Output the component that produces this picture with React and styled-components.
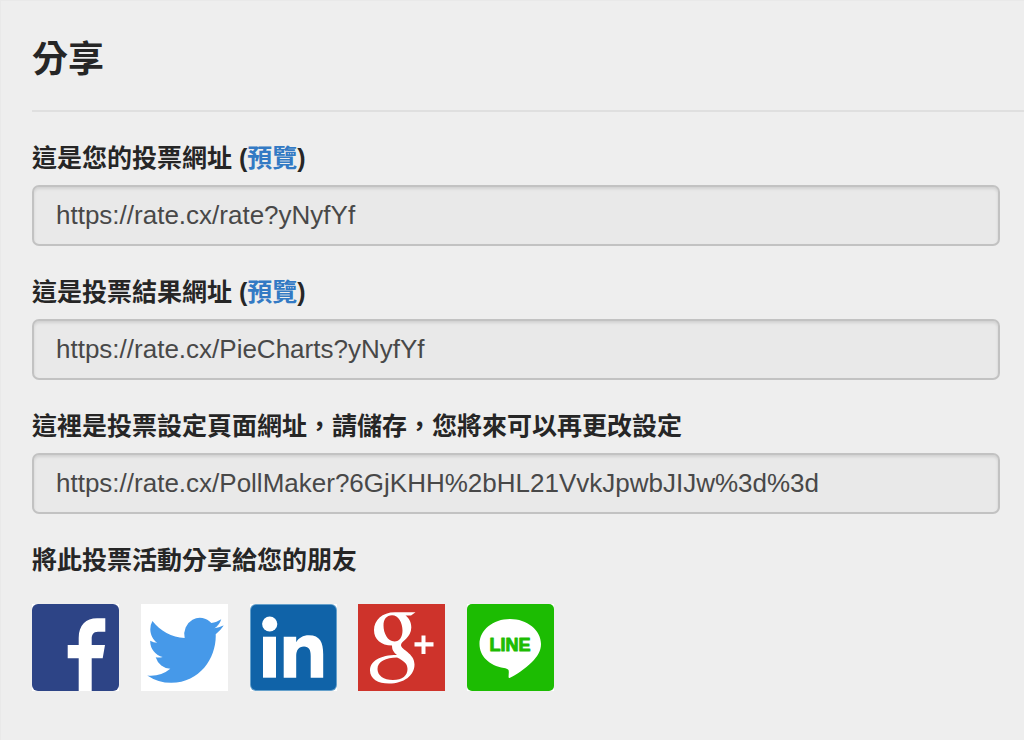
import React from "react";
import styled, { createGlobalStyle } from "styled-components";

const fields = [
  {
    id: "vote-url",
    label: "這是您的投票網址",
    value: "https://rate.cx/rate?yNyfYf",
    preview: true,
  },
  {
    id: "result-url",
    label: "這是投票結果網址",
    value: "https://rate.cx/PieCharts?yNyfYf",
    preview: true,
  },
  {
    id: "setting-url",
    label: "這裡是投票設定頁面網址，請儲存，您將來可以再更改設定",
    value: "https://rate.cx/PollMaker?6GjKHH%2bHL21VvkJpwbJIJw%3d%3d",
    preview: false,
  },
];

const FacebookIcon = () => (
  <Icon viewBox="0 0 87 87" aria-hidden="true">
    <rect width="87" height="87" fill="#fff" />
    <rect width="87" height="87" rx="6" fill="#2d4486" />
    <path
      fill="#fff"
      d="M46.7 87V54.3H35.7V41H46.7V34C46.7 21 54 14.3 65 14.3H73.3V27.7H66C61 27.7 59.7 31 59.7 35V41H73L70.7 54.3H59.7V87Z"
    />
  </Icon>
);

const TwitterIcon = () => (
  <Icon viewBox="0 0 87 87" aria-hidden="true">
    <rect width="87" height="87" fill="#fff" />
    <path
      fill="#4699e9"
      transform="translate(6.2 6.4) scale(3.18 3.33)"
      d="M23.953 4.57a10 10 0 01-2.825.775 4.958 4.958 0 002.163-2.723c-.951.555-2.005.959-3.127 1.184a4.92 4.92 0 00-8.384 4.482C7.69 8.095 4.067 6.13 1.64 3.162a4.822 4.822 0 00-.666 2.475c0 1.71.87 3.213 2.188 4.096a4.904 4.904 0 01-2.228-.616v.06a4.923 4.923 0 003.946 4.827 4.996 4.996 0 01-2.212.085 4.936 4.936 0 004.604 3.417 9.867 9.867 0 01-6.102 2.105c-.39 0-.779-.023-1.17-.067a13.995 13.995 0 007.557 2.209c9.053 0 13.998-7.496 13.998-13.985 0-.21 0-.42-.015-.63A9.935 9.935 0 0024 4.59z"
    />
  </Icon>
);

const LinkedinIcon = () => (
  <Icon viewBox="0 0 87 87" aria-hidden="true">
    <rect width="87" height="87" fill="#fff" />
    <rect width="87" height="87" rx="6" fill="#65a0cb" />
    <rect x="1" y="1" width="85" height="85" rx="5" fill="#1063a8" />
    <circle cx="19.7" cy="20" r="7.6" fill="#fff" />
    <path fill="#fff" d="M13 32.7H26V73.7H13Z" />
    <path
      fill="#fff"
      d="M33.7 32.7H46.2V38.3C48.5 34 53 31.3 59 31.3C70 31.3 73.2 38.5 73.2 50V73.7H60.7V52C60.7 46 59 42.5 54 42.5C48.5 42.5 46.2 46.5 46.2 52V73.7H33.7Z"
    />
  </Icon>
);

const GooglePlusIcon = () => (
  <Icon viewBox="0 0 87 87" aria-hidden="true">
    <rect width="87" height="87" fill="#ce332b" />
    <path
      fill="#fff"
      fillRule="evenodd"
      d="M57.5 8.3H37C24 8.3 16 16.500 16 26C16 35.500 23 41.500 34 41.500C34 46 35.500 48 39 51C22 51 12 57 12 66.500C12 75 20 79.500 31 79.500C46 79.500 56.500 71.500 56.500 60.500C56.500 49 43 46 43 41C43 37 53.300 34 53.300 23.500C53.300 18 51 14 47.500 11.500H53ZM34 11.300C40.500 11.300 44.500 19 44.500 26.500C44.500 33 41.500 37.500 36.500 37.500C29.500 37.500 25.500 29 25.500 21.500C25.500 15.500 28.500 11.300 34 11.300ZM39 53.500C45 56.500 49.500 59 49.500 65C49.500 71.500 44.500 76 35 76C25.500 76 19.500 71.500 19.500 65C19.500 57.500 28 53.500 39 53.500Z"
    />
    <path fill="#fff" d="M63.500 31.500H67.500V38.300H75.500V42.500H67.500V50H63.500V42.500H56.500V38.300H63.500Z" />
  </Icon>
);

const LineIcon = () => (
  <Icon viewBox="0 0 87 87" aria-hidden="true">
    <rect width="87" height="87" fill="#fff" />
    <rect width="87" height="87" rx="5" fill="#1cbc02" />
    <path
      fill="#fff"
      d="M43 15C60 15 74 26 74 40C74 47 70.500 52.500 65 58C58 65 49 71 42.500 74C40.500 74.500 42.500 69 41.500 66C40.500 64.500 39 64.500 37 64C22 61.500 12.500 52 12.500 40C12.500 26 26 15 43 15Z"
    />
    <LogoText x="43" y="47" textAnchor="middle">
      LINE
    </LogoText>
  </Icon>
);

const shares = [
  { name: "Facebook", icon: FacebookIcon },
  { name: "Twitter", icon: TwitterIcon },
  { name: "LinkedIn", icon: LinkedinIcon },
  { name: "Google+", icon: GooglePlusIcon },
  { name: "LINE", icon: LineIcon },
];

const UrlField = ({ id, label, value, preview }) => {
  return (
    <Field>
      <FieldHeader>
        <label htmlFor={id}>{label}</label>
        {preview && (
          <>
            {" ("}
            <PreviewLink href="#preview">預覽</PreviewLink>)
          </>
        )}
      </FieldHeader>
      <UrlInput id={id} type="text" value={value} readOnly />
    </Field>
  );
};

const App = () => {
  return (
    <>
      <GlobalStyle />
      <Page>
        <Title>分享</Title>
        <Content>
          {fields.map((field) => (
            <UrlField key={field.id} {...field} />
          ))}
          <section>
            <ShareTitle>將此投票活動分享給您的朋友</ShareTitle>
            <ShareList>
              {shares.map(({ name, icon: ShareIcon }) => (
                <li key={name}>
                  <ShareLink href="#share" aria-label={name}>
                    <ShareIcon />
                  </ShareLink>
                </li>
              ))}
            </ShareList>
          </section>
        </Content>
      </Page>
    </>
  );
};

export default App;

const GlobalStyle = createGlobalStyle`
  * {
    box-sizing: border-box;
  }
  body {
    margin: 0;
    background: #eeeeee;
    color: #262626;
    font-family: "Liberation Sans", "Noto Sans CJK TC", sans-serif;
    font-size: 25px;
    line-height: 36px;
  }
`;

const Page = styled.main`
  min-height: 100vh;
  padding: 33px 0 48px 31px;
  border-top: 1px solid #e9e9e9;
  border-left: 1px solid #e9e9e9;
`;

const Title = styled.h1`
  margin: 0;
  padding-bottom: 24px;
  border-bottom: 2px solid #dfdfdf;
  font-size: 36px;
  font-weight: bold;
  line-height: 52px;
`;

const Content = styled.div`
  display: flex;
  flex-direction: column;
  gap: 28px;
  padding: 28px 24px 0 0;
`;

const Field = styled.div`
  display: flex;
  flex-direction: column;
  gap: 9px;
`;

const FieldHeader = styled.div`
  font-weight: bold;
`;

const PreviewLink = styled.a`
  color: #337ac4;
  text-decoration: none;
`;

const UrlInput = styled.input`
  width: 100%;
  height: 61px;
  padding: 0 22px;
  background: #e9e9e9;
  border: 2px solid #c2c2c2;
  border-radius: 7px;
  box-shadow: inset 0 2px 3px rgba(0, 0, 0, 0.1);
  color: #484848;
  font-family: inherit;
  font-size: 26px;
  outline: none;
`;

const ShareTitle = styled.h2`
  margin: 0;
  font-size: 25px;
  font-weight: bold;
  line-height: 36px;
`;

const ShareList = styled.ul`
  display: flex;
  justify-content: space-between;
  max-width: 522px;
  margin: 26px 0 0;
  padding: 0;
  list-style: none;
`;

const ShareLink = styled.a`
  display: block;
`;

const Icon = styled.svg`
  display: block;
  width: 87px;
  height: 87px;
`;

const LogoText = styled.text`
  fill: #1cbc02;
  stroke: #1cbc02;
  stroke-width: 1px;
  stroke-linejoin: round;
  font-family: "Liberation Sans", sans-serif;
  font-size: 18px;
  font-weight: bold;
`;
